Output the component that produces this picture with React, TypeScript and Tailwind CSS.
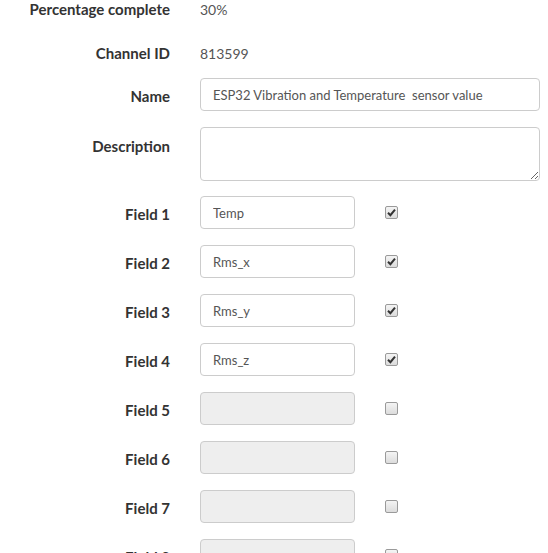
import React from 'react';

const font = { fontFamily: 'Lato, "Liberation Sans", sans-serif' };

function Check({ checked }: { checked: boolean }) {
  return (
    <span className="flex h-[13px] w-[13px] items-center justify-center rounded-[2px] border border-[#9a9a9a] bg-gradient-to-b from-[#f4f4f4] to-[#dcdcdc]">
      {checked && (
        <svg width="9" height="9" viewBox="0 0 9 9">
          <path d="M1 4.8 L3.4 7.2 L8 1.6" fill="none" stroke="#333" strokeWidth="2" />
        </svg>
      )}
    </span>
  );
}

const fields = [
  { n: 1, v: 'Temp', on: true },
  { n: 2, v: 'Rms_x', on: true },
  { n: 3, v: 'Rms_y', on: true },
  { n: 4, v: 'Rms_z', on: true },
  { n: 5, v: '', on: false },
  { n: 6, v: '', on: false },
  { n: 7, v: '', on: false },
  { n: 8, v: '', on: false },
];

const label = 'w-[170px] shrink-0 text-right text-[15px] font-bold text-[#333]';

export default function App() {
  return (
    <div className="h-[553px] overflow-hidden bg-white" style={font}>
      <div className="flex flex-col">
        {/* Info rows */}
        <div className="flex h-[18px] items-center gap-[30px]">
          <div className={label}>Percentage complete</div>
          <div className="text-[14px] text-[#555]">30%</div>
        </div>
        <div className="mt-[26px] flex h-[18px] items-center gap-[30px]">
          <div className={label}>Channel ID</div>
          <div className="text-[14px] text-[#555]">813599</div>
        </div>

        {/* Name */}
        <div className="mt-[16px] flex h-[33px] items-center gap-[30px]">
          <div className={label + ' pt-[3px]'}>Name</div>
          <input
            readOnly
            value="ESP32 Vibration and Temperature  sensor value"
            className="h-[33px] w-[340px] rounded-[4px] border border-[#ccc] px-[12px] text-[13px] text-[#555] outline-none"
          />
        </div>

        {/* Description */}
        <div className="mt-[16px] flex gap-[30px]">
          <div className={label + ' pt-[8px]'}>Description</div>
          <textarea
            readOnly
            className="h-[54px] w-[340px] rounded-[4px] border border-[#ccc] px-[12px] text-[13px] text-[#555] outline-none"
          />
        </div>

        {/* Fields */}
        <div className="mt-[15px] flex flex-col gap-[16px]">
          {fields.map((f) => (
            <div key={f.n} className="flex h-[33px] items-center gap-[30px]">
              <div className={label + ' pt-[3px]'}>Field {f.n}</div>
              <input
                readOnly
                value={f.v}
                className={
                  'h-[33px] w-[155px] rounded-[4px] border border-[#ccc] px-[12px] text-[13px] text-[#555] outline-none ' +
                  (f.on ? 'bg-white' : 'bg-[#eee]')
                }
              />
              <Check checked={f.on} />
            </div>
          ))}
        </div>
      </div>
    </div>
  );
}
